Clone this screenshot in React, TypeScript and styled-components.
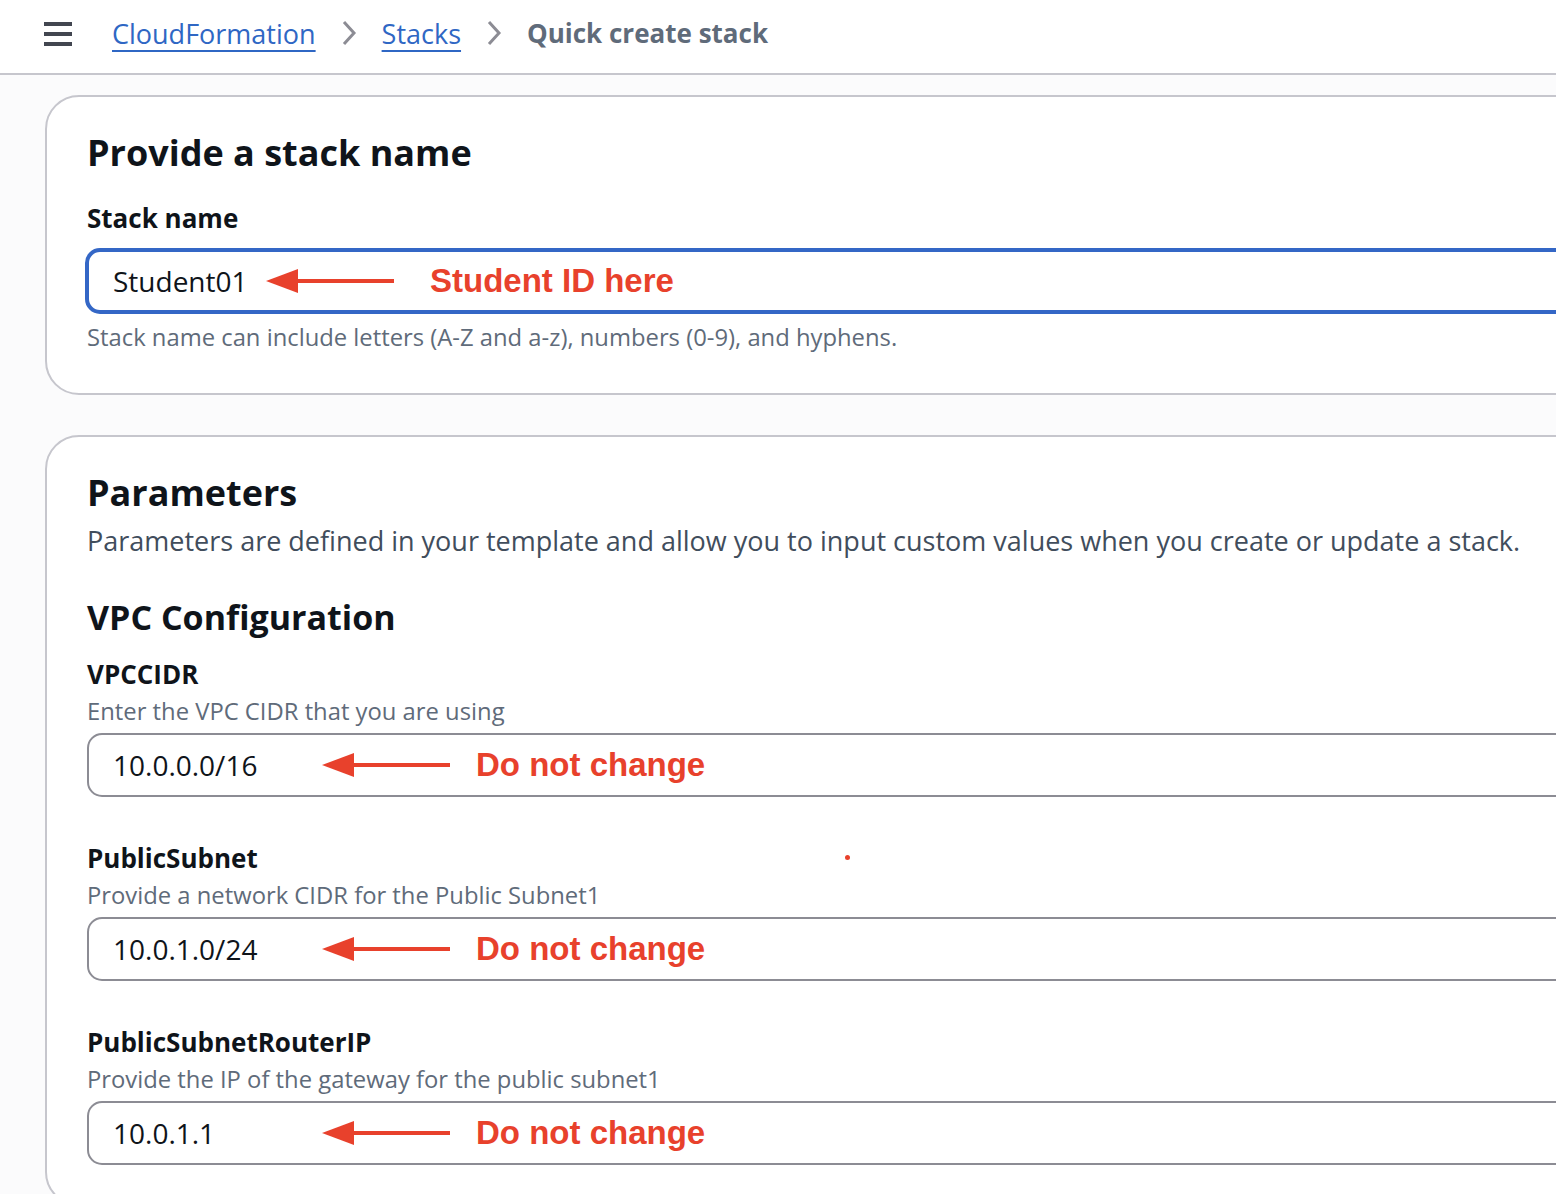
import React from 'react';
import styled, { createGlobalStyle } from 'styled-components';

const GlobalStyle = createGlobalStyle`
  html, body {
    margin: 0;
    padding: 0;
    background: #fbfbfc;
    overflow: hidden;
  }
  body {
    font-family: "Open Sans", "Noto Sans", sans-serif;
    color: #000716;
  }
`;

export const Page = styled.div`
  width: 1556px;
  height: 1194px;
  overflow: hidden;
  display: flex;
  flex-direction: column;
`;

export const Header = styled.header`
  height: 73px;
  flex-shrink: 0;
  background: #ffffff;
  border-bottom: 2px solid #c6c6cd;
  display: flex;
  align-items: center;
  padding-left: 44px;
  gap: 40px;
`;

export const Hamburger = styled.div`
  width: 28px;
  display: flex;
  flex-direction: column;
  gap: 6px;
  margin-top: -6px;

  span {
    height: 4px;
    background: #424650;
  }
`;

export const Crumbs = styled.nav`
  display: flex;
  align-items: center;
  gap: 25px;
  font-size: 27px;
  font-weight: 500;
  margin-top: -7px;
`;

export const CrumbLink = styled.a`
  color: #2f67c4;
  text-decoration: underline;
  text-decoration-thickness: 2px;
  text-underline-offset: 6px;
`;

export const CrumbCurrent = styled.span`
  color: #5f6b7a;
  font-size: 26px;
  font-weight: 700;
`;

export const Main = styled.main`
  display: flex;
  flex-direction: column;
  gap: 40px;
  padding: 20px 0 0 45px;
`;

export const Card = styled.section`
  width: 1600px;
  background: #ffffff;
  border: 2px solid #c6c6cd;
  border-radius: 34px;
  padding: 31px 40px 39px 40px;
  box-sizing: border-box;
`;

export const Heading = styled.h1`
  margin: 0;
  font-size: 36px;
  line-height: 50px;
  font-weight: 700;
  color: #0f141a;
`;

export const SubHeading = styled.h2`
  margin: 0;
  font-size: 34px;
  line-height: 44px;
  font-weight: 700;
  color: #0f141a;
`;

export const Intro = styled.p`
  margin: 5px 0 36px 0;
  font-size: 27px;
  font-weight: 500;
  line-height: 36px;
  color: #414d5c;
`;

export const Field = styled.div<{ $top?: number }>`
  position: relative;
  display: flex;
  flex-direction: column;
  margin-top: ${(p) => p.$top ?? 0}px;
`;

export const Label = styled.label`
  font-size: 26px;
  font-weight: 700;
  line-height: 39px;
  color: #0f141a;
`;

export const Hint = styled.div`
  font-size: 23.8px;
  font-weight: 500;
  line-height: 34px;
  color: #5f6b7a;
`;

export const InputBox = styled.div<{ $focus?: boolean }>`
  position: relative;
  height: ${(p) => (p.$focus ? 66 : 64)}px;
  box-sizing: border-box;
  border: ${(p) => (p.$focus ? '4px solid #3467c6' : '2px solid #8c8c94')};
  border-radius: 15px;
  background: #ffffff;
  display: flex;
  align-items: center;
  padding-left: 24px;
  margin: ${(p) => (p.$focus ? '10px 0 6px -2px' : '5px 0 0 0')};
  font-size: 28px;
  font-weight: 500;
  color: #0f141a;
`;

export const Annotation = styled.div<{ $left: number; $gap: number }>`
  position: absolute;
  left: ${(p) => p.$left}px;
  top: 50%;
  transform: translateY(-50%);
  display: flex;
  align-items: center;
  gap: ${(p) => p.$gap}px;
  font-family: "Liberation Sans", Arial, sans-serif;
  font-weight: 700;
  font-size: 33px;
  color: #e8412c;
  white-space: nowrap;
`;

export const Dot = styled.span`
  position: absolute;
  left: 758px;
  top: 16px;
  width: 5px;
  height: 5px;
  border-radius: 50%;
  background: #e8412c;
`;

const Chevron = () => (
  <svg width="16" height="26" viewBox="0 0 16 26">
    <path d="M3 2 L13 13 L3 24" fill="none" stroke="#8c8c94" strokeWidth="3" />
  </svg>
);

const Arrow = () => (
  <svg width="128" height="28" viewBox="0 0 128 28">
    <polygon points="0,14 32,2 32,26" fill="#e8412c" />
    <rect x="30" y="12" width="98" height="4" fill="#e8412c" />
  </svg>
);

const Note: React.FC<{ left: number; gap: number; text: string }> = ({ left, gap, text }) => (
  <Annotation $left={left} $gap={gap}>
    <Arrow />
    <span>{text}</span>
  </Annotation>
);

const params = [
  { label: 'VPCCIDR', hint: 'Enter the VPC CIDR that you are using', value: '10.0.0.0/16' },
  { label: 'PublicSubnet', hint: 'Provide a network CIDR for the Public Subnet1', value: '10.0.1.0/24', dot: true },
  { label: 'PublicSubnetRouterIP', hint: 'Provide the IP of the gateway for the public subnet1', value: '10.0.1.1' },
];

const App: React.FC = () => {
  return (
    <Page>
      <GlobalStyle />
      <Header>
        <Hamburger>
          <span />
          <span />
          <span />
        </Hamburger>
        <Crumbs>
          <CrumbLink>CloudFormation</CrumbLink>
          <Chevron />
          <CrumbLink>Stacks</CrumbLink>
          <Chevron />
          <CrumbCurrent>Quick create stack</CrumbCurrent>
        </Crumbs>
      </Header>

      <Main>
        <Card>
          <Heading>Provide a stack name</Heading>
          <Field $top={21}>
            <Label>Stack name</Label>
            <InputBox $focus>
              Student01
              <Note left={177} gap={36} text="Student ID here" />
            </InputBox>
            <Hint>Stack name can include letters (A-Z and a-z), numbers (0-9), and hyphens.</Hint>
          </Field>
        </Card>

        <Card>
          <Heading>Parameters</Heading>
          <Intro>Parameters are defined in your template and allow you to input custom values when you create or update a stack.</Intro>
          <SubHeading>VPC Configuration</SubHeading>
          {params.map((p, i) => (
            <Field key={p.label} $top={i === 0 ? 16 : 42}>
              <Label>{p.label}</Label>
              <Hint>{p.hint}</Hint>
              <InputBox>
                {p.value}
                <Note left={233} gap={26} text="Do not change" />
              </InputBox>
              {p.dot && <Dot />}
            </Field>
          ))}
        </Card>
      </Main>
    </Page>
  );
};

export default App;
